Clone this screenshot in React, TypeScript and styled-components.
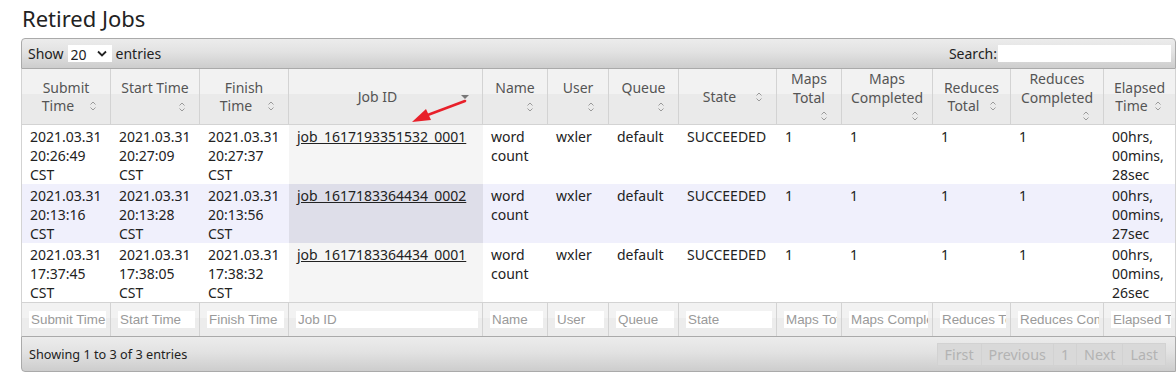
import styled, { createGlobalStyle } from 'styled-components';

const GlobalStyle = createGlobalStyle`
  html, body {
    margin: 0;
    padding: 0;
    overflow: hidden;
    background: #fff;
  }
  body {
    font-family: "Noto Sans", "Open Sans", sans-serif;
    color: #222;
  }
`;

type Column = { label: string; width: number; sorted?: boolean };

const columns: Column[] = [
  { label: 'Submit Time', width: 89 },
  { label: 'Start Time', width: 89 },
  { label: 'Finish Time', width: 89 },
  { label: 'Job ID', width: 194, sorted: true },
  { label: 'Name', width: 65 },
  { label: 'User', width: 61 },
  { label: 'Queue', width: 70 },
  { label: 'State', width: 98 },
  { label: 'Maps Total', width: 65 },
  { label: 'Maps Completed', width: 91 },
  { label: 'Reduces Total', width: 78 },
  { label: 'Reduces Completed', width: 93 },
  { label: 'Elapsed Time', width: 71 },
];

const jobs = [
  {
    submit: '20:26:49',
    start: '20:27:09',
    finish: '20:27:37',
    id: 'job_1617193351532_0001',
    elapsed: '28sec',
    day: '2021.03.31',
  },
  {
    submit: '20:13:16',
    start: '20:13:28',
    finish: '20:13:56',
    id: 'job_1617183364434_0002',
    elapsed: '27sec',
    day: '2021.03.31',
  },
  {
    submit: '17:37:45',
    start: '17:38:05',
    finish: '17:38:32',
    id: 'job_1617183364434_0001',
    elapsed: '26sec',
    day: '2021.03.31',
  },
];

const Page = styled.div`
  position: relative;
  padding: 0 0 0 21px;
  width: 1176px;
  height: 379px;
  box-sizing: border-box;
`;

const Title = styled.h2`
  margin: 0 0 5px 1px;
  padding-top: 3px;
  font-size: 22px;
  font-weight: 400;
  line-height: 30px;
  color: #222;
`;

const Wrapper = styled.div`
  width: 1155px;
`;

const Toolbar = styled.div<{ $bottom?: boolean }>`
  display: flex;
  align-items: center;
  justify-content: space-between;
  box-sizing: border-box;
  height: ${(p) => (p.$bottom ? '36px' : '31px')};
  padding: 0 4px 0 6px;
  border: 1px solid #aaa;
  border-radius: ${(p) => (p.$bottom ? '0 0 0 4px' : '4px 4px 0 0')};
  background: linear-gradient(to bottom, #ececec 0%, #e2e2e2 45%, #cdcdcd 100%);
  font-size: 14px;
  color: #222;
`;

const LengthLabel = styled.label`
  display: flex;
  align-items: center;
  gap: 4px;
`;

const SelectBox = styled.span`
  position: relative;
  display: inline-block;
  width: 44px;
  height: 17px;
  background: #fff;
`;

const Select = styled.select`
  appearance: none;
  width: 100%;
  height: 100%;
  border: 0;
  padding: 0 0 0 3px;
  background: transparent;
  font-family: "Noto Sans", sans-serif;
  font-size: 14px;
  line-height: 17px;
  color: #222;
  outline: none;
`;

const Chevron = styled.svg`
  position: absolute;
  right: 5px;
  top: 5px;
  pointer-events: none;
`;

const SearchLabel = styled.label`
  display: flex;
  align-items: center;
  gap: 1px;
`;

const SearchInput = styled.input`
  width: 173px;
  height: 17px;
  border: 0;
  padding: 0;
  background: #fff;
  outline: none;
`;

const Table = styled.table`
  width: 1155px;
  table-layout: fixed;
  border-collapse: separate;
  border-spacing: 0;
  border-left: 1px solid #d3d3d3;
  border-right: 1px solid #d3d3d3;
  font-size: 14px;
`;

const HeadCell = styled.th<{ $last?: boolean }>`
  padding: 1px 9px 0;
  border-right: ${(p) => (p.$last ? '0' : '1px solid #d3d3d3')};
  border-bottom: 1px solid #d3d3d3;
  background: linear-gradient(to bottom, #f2f2f2 0%, #f2f2f2 45%, #eaeaea 45%, #eaeaea 100%);
  font-weight: 400;
  line-height: 18.67px;
  color: #555;
  text-align: center;
  vertical-align: middle;
  height: 56px;
  box-sizing: border-box;
`;

const SortWrap = styled.div`
  text-align: center;
`;

const SortIcon = styled.svg`
  float: right;
  margin-top: 1px;
`;

const Row = styled.tr<{ $even?: boolean }>`
  background: ${(p) => (p.$even ? '#f0f0fc' : '#fff')};
`;

const Cell = styled.td<{ $sorted?: boolean; $even?: boolean }>`
  padding: 3px 8px 0;
  height: 59px;
  box-sizing: border-box;
  vertical-align: top;
  line-height: 18.67px;
  color: #222;
  background: ${(p) => (p.$sorted ? (p.$even ? '#dedee9' : '#f5f5f5') : 'transparent')};
  word-wrap: break-word;
`;

const JobLink = styled.a`
  color: #222;
  text-decoration: underline;
`;

const FilterCell = styled.th<{ $last?: boolean }>`
  padding: 0 4px 0 7px;
  height: 34px;
  box-sizing: border-box;
  border-top: 1px solid #d3d3d3;
  border-right: ${(p) => (p.$last ? '0' : '1px solid #d3d3d3')};
  background: linear-gradient(to bottom, #f2f2f2 0%, #f2f2f2 45%, #ececec 45%, #ececec 100%);
  vertical-align: middle;
`;

const FilterInput = styled.input`
  display: block;
  width: 100%;
  height: 17px;
  box-sizing: border-box;
  border: 0;
  padding: 0 0 0 2px;
  background: #fff;
  font-family: "Liberation Sans", Arial, sans-serif;
  font-size: 13.4px;
  outline: none;
  &::placeholder {
    color: #9a9a9a;
  }
`;

const Info = styled.div`
  padding-left: 1px;
  font-size: 12.7px;
`;

const Pager = styled.div`
  display: flex;
  margin-right: 5px;
`;

const PageButton = styled.span`
  display: inline-block;
  height: 23px;
  line-height: 22px;
  padding: 0 7px;
  box-sizing: border-box;
  border: 1px solid #d2d2d2;
  margin-left: -1px;
  background: #d9d9d9;
  color: #b3b3b3;
  font-size: 14.3px;
`;

const Arrow = styled.svg`
  position: absolute;
  left: 0;
  top: 0;
  pointer-events: none;
`;

function SortBoth() {
  return (
    <SortIcon width="16" height="16" viewBox="0 0 16 16">
      <path d="M5.5 6.5 L8 4 L10.5 6.5 M5.5 9.5 L8 12 L10.5 9.5" fill="none" stroke="#9a9a9a" strokeWidth="1" />
    </SortIcon>
  );
}

function SortDesc() {
  return (
    <SortIcon width="16" height="16" viewBox="0 0 16 16">
      <path d="M4 6 L12 6 L8 10 Z" fill="#777" />
    </SortIcon>
  );
}

function DateText({ day, time }: { day: string; time: string }) {
  return (
    <>
      {day}
      <br />
      {time}
      <br />
      CST
    </>
  );
}

export default function App() {
  return (
    <Page>
      <GlobalStyle />
      <Title>Retired Jobs</Title>
      <Wrapper>
        <Toolbar>
          <LengthLabel>
            Show
            <SelectBox>
              <Select defaultValue="20">
                <option value="20">20</option>
                <option value="40">40</option>
                <option value="60">60</option>
                <option value="80">80</option>
                <option value="100">100</option>
              </Select>
              <Chevron width="10" height="7" viewBox="0 0 10 7">
                <path d="M1 1.5 L5 5.5 L9 1.5" fill="none" stroke="#222" strokeWidth="1.8" />
              </Chevron>
            </SelectBox>
            entries
          </LengthLabel>
          <SearchLabel>
            Search:
            <SearchInput type="text" />
          </SearchLabel>
        </Toolbar>
        <Table>
          <colgroup>
            {columns.map((c) => (
              <col key={c.label} style={{ width: c.width }} />
            ))}
          </colgroup>
          <thead>
            <tr>
              {columns.map((c, i) => (
                <HeadCell key={c.label} $last={i === columns.length - 1}>
                  <SortWrap>
                    {c.label}
                    {c.sorted ? <SortDesc /> : <SortBoth />}
                  </SortWrap>
                </HeadCell>
              ))}
            </tr>
          </thead>
          <tbody>
            {jobs.map((j, r) => {
              const even = r % 2 === 1;
              return (
                <Row key={j.id} $even={even}>
                  <Cell><DateText day={j.day} time={j.submit} /></Cell>
                  <Cell><DateText day={j.day} time={j.start} /></Cell>
                  <Cell><DateText day={j.day} time={j.finish} /></Cell>
                  <Cell $sorted $even={even}>
                    <JobLink href="#">{j.id}</JobLink>
                  </Cell>
                  <Cell>word count</Cell>
                  <Cell>wxler</Cell>
                  <Cell>default</Cell>
                  <Cell>SUCCEEDED</Cell>
                  <Cell>1</Cell>
                  <Cell>1</Cell>
                  <Cell>1</Cell>
                  <Cell>1</Cell>
                  <Cell>
                    00hrs,
                    <br />
                    00mins,
                    <br />
                    {j.elapsed}
                  </Cell>
                </Row>
              );
            })}
          </tbody>
          <tfoot>
            <tr>
              {columns.map((c, i) => (
                <FilterCell key={c.label} $last={i === columns.length - 1}>
                  <FilterInput type="text" placeholder={c.label} />
                </FilterCell>
              ))}
            </tr>
          </tfoot>
        </Table>
        <Toolbar $bottom>
          <Info>Showing 1 to 3 of 3 entries</Info>
          <Pager>
            <PageButton>First</PageButton>
            <PageButton>Previous</PageButton>
            <PageButton>1</PageButton>
            <PageButton>Next</PageButton>
            <PageButton>Last</PageButton>
          </Pager>
        </Toolbar>
      </Wrapper>
      <Arrow width="1176" height="379" viewBox="0 0 1176 379">
        <line x1="465" y1="101" x2="425" y2="116" stroke="#e8202a" strokeWidth="2.5" strokeLinecap="round" />
        <path d="M412 122 L426 109 L431 120 Z" fill="#e8202a" />
      </Arrow>
    </Page>
  );
}
